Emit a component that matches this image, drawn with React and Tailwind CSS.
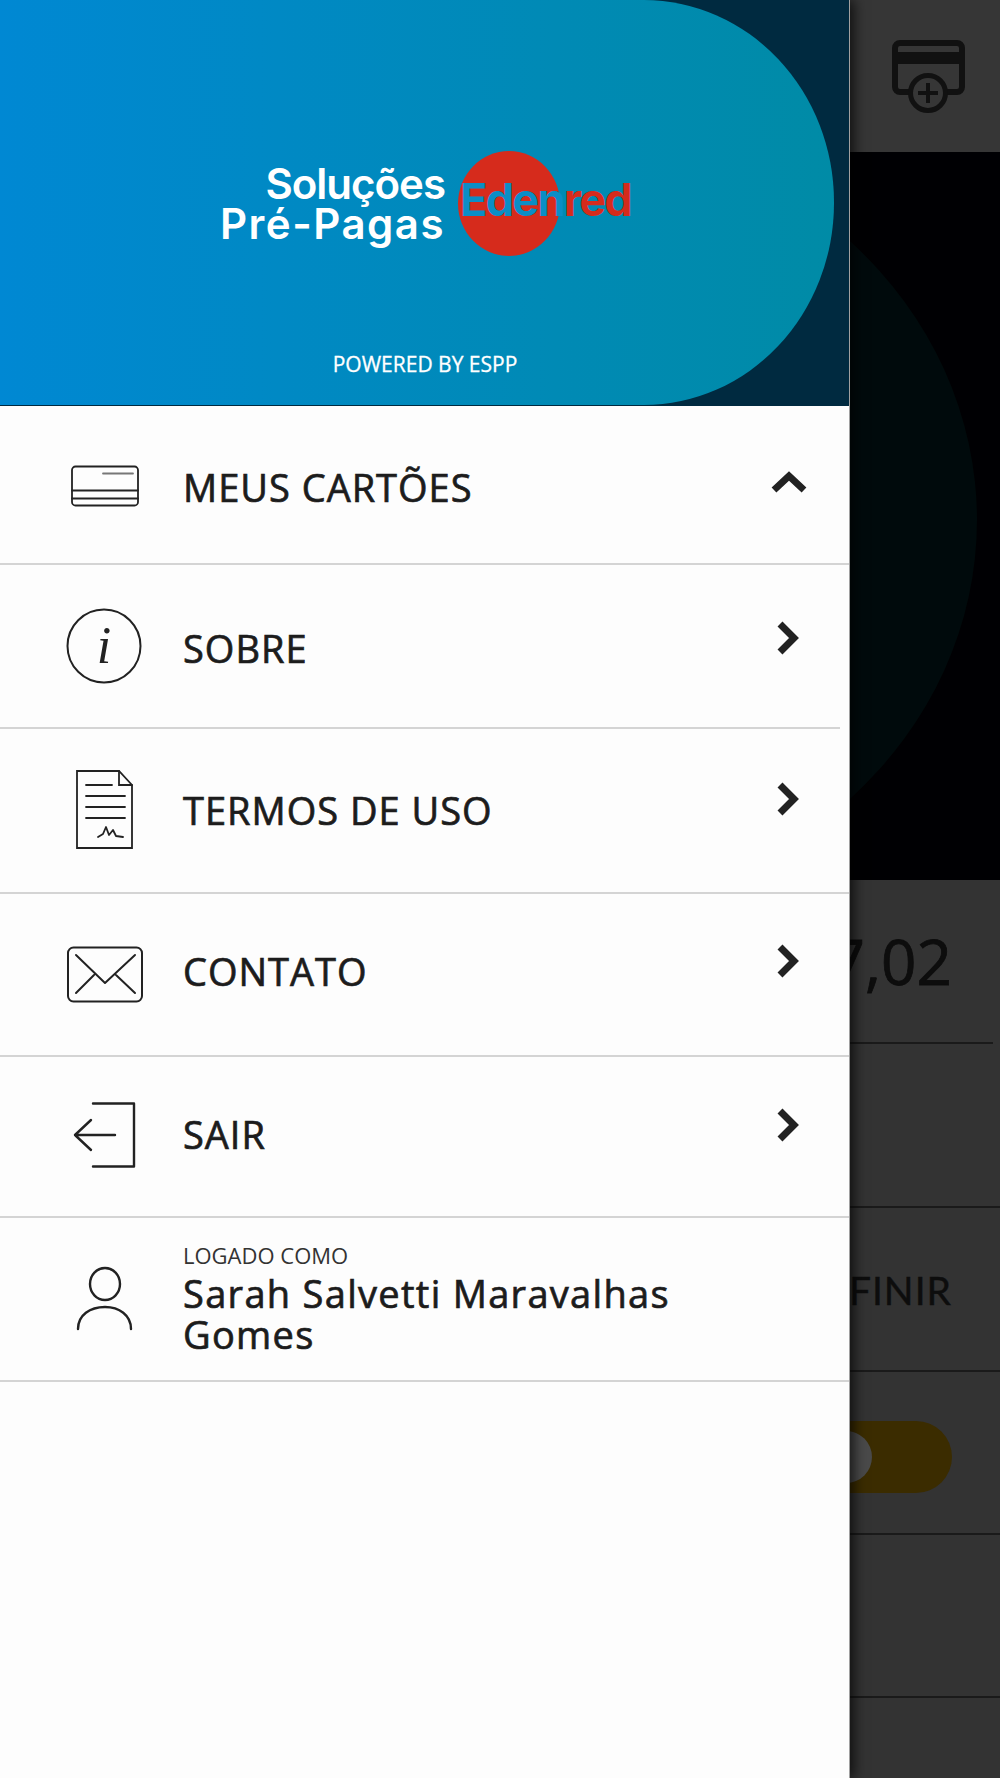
import React from "react";

const Chevron = ({ up }) => (
  <svg width="44" height="44" viewBox="0 0 44 44" fill="none" stroke="#222" strokeWidth="7" strokeLinecap="butt" strokeLinejoin="miter">
    {up ? <path d="M7 30 L22 16 L37 30" /> : <path d="M13 8 L27 22 L13 36" />}
  </svg>
);

const stroke = { fill: "none", stroke: "#222", strokeLinecap: "round", strokeLinejoin: "round" };

const CardIcon = () => (
  <svg width="90" height="60" viewBox="0 0 90 60" {...stroke}>
    <rect x="13" y="11.5" width="66" height="39" rx="3.5" strokeWidth="1.8" />
    <path d="M13 35.5H79M13 43.5H79" strokeWidth="1.8" />
    <path d="M44 18.5H74" stroke="#777" strokeWidth="1.8" />
  </svg>
);

const InfoIcon = () => (
  <svg width="90" height="90" viewBox="0 0 90 90" {...stroke} strokeWidth="2">
    <circle cx="45" cy="45" r="36.5" />
    <text x="45" y="62" textAnchor="middle" fontSize="52" fontStyle="italic" fontFamily="'Liberation Serif', serif" fill="#222" stroke="none">i</text>
  </svg>
);

const DocIcon = () => (
  <svg width="90" height="90" viewBox="0 0 90 90" {...stroke} strokeWidth="1.8">
    <path d="M18 6H60L73 20V83H18Z" strokeLinejoin="miter" />
    <path d="M60 6V20H73" strokeLinejoin="miter" />
    <path d="M27 20H53M27 31H66M27 42H66M27 53H66" />
    <path d="M39 72L44 69L47 62L50 70L54 65L57 71L64 72" />
  </svg>
);

const MailIcon = () => (
  <svg width="90" height="70" viewBox="0 0 90 70" {...stroke} strokeWidth="2">
    <rect x="9" y="7.5" width="74" height="54" rx="5.5" />
    <path d="M17 15L46 43L76 15M17 53L35 35M76 53L57 35" />
  </svg>
);

const ExitIcon = () => (
  <svg width="90" height="80" viewBox="0 0 90 80" {...stroke} strokeWidth="2.4">
    <path d="M34 8.5H75V71.5H34" />
    <path d="M56 40H16M32 25L16 40L32 55" />
  </svg>
);

const UserIcon = () => (
  <svg width="90" height="80" viewBox="0 0 90 80" {...stroke} strokeWidth="2.4">
    <ellipse cx="46" cy="24" rx="15" ry="16" />
    <path d="M19 69C19 55 31 47 46 47C60 47 72 55 72 69" />
  </svg>
);

const Row = ({ h, icon, iconOffset, label, labelOffset, chevOffset, up }) => (
  <div className={`flex items-center shrink-0 ${h}`}>
    <div className="w-[59px] shrink-0" />
    <div className={`w-[90px] shrink-0 flex justify-center ${iconOffset}`}>{icon}</div>
    <span className={`ml-[34px] text-[38px] leading-[48px] tracking-[1px] text-[#1c1c1c] [-webkit-text-stroke:0.7px_#1c1c1c] whitespace-nowrap ${labelOffset}`}>{label}</span>
    <div className={`ml-auto mr-[38px] ${chevOffset}`}>
      <Chevron up={up} />
    </div>
  </div>
);

const Divider = ({ short }) => <div className={`h-[2px] shrink-0 bg-[#d4d4d4] ${short ? "w-[840px]" : "w-[849px]"}`} />;

export default function App() {
  return (
    <div className="flex w-[1000px] h-[1778px] overflow-hidden bg-[#333333] font-['Open_Sans',sans-serif]">
      <aside className="relative z-10 flex flex-col w-[850px] shrink-0 bg-[#fdfdfd] border-r border-[#a0a0a0] shadow-[4px_0_12px_rgba(0,0,0,0.7)]">
        <header className="h-[406px] shrink-0 bg-[#002a40]">
          <div className="flex flex-col items-center h-[405px] w-[834px] pl-[16px] rounded-r-[190px_202px] bg-[linear-gradient(90deg,#0088d3,#008ba6)]">
            <div className="relative mt-[151px] w-[406px] h-[105px] flex">
              <div className="absolute left-[236px] top-0 w-[102px] h-[105px] rounded-[50%] bg-[#d62b1c]" />
              <div className="relative w-[223px] pt-[13px] flex flex-col items-end text-white font-['Inter',sans-serif] font-semibold text-[42px] leading-[40px] tracking-[-1px] whitespace-nowrap">
                <span>Soluções</span>
                <span className="tracking-[1.5px]">Pré-Pagas</span>
              </div>
              <div className="relative ml-[15px] mt-[24px] font-['Inter',sans-serif] font-bold text-[45px] leading-[50px] tracking-[-1.7px] whitespace-nowrap">
                <span className="text-[#0b8ec6]">Eden</span>
                <span className="text-[#d62b1c]">red</span>
              </div>
            </div>
            <div className="mt-auto mb-[28px] text-white text-[21px] leading-[26px] [-webkit-text-stroke:0.3px_#ffffff]">POWERED BY ESPP</div>
          </div>
        </header>

        <Row h="h-[157px]" up icon={<CardIcon />} label="MEUS CARTÕES" chevOffset="-mt-[5px]" labelOffset="pt-[4px]" />
        <Divider />
        <Row h="h-[162px]" icon={<InfoIcon />} label="SOBRE" chevOffset="-mt-[16px]" labelOffset="pt-[3px]" />
        <Divider short />
        <Row h="h-[163px]" icon={<DocIcon />} iconOffset="-mt-[1px]" label="TERMOS DE USO" chevOffset="-mt-[24px]" labelOffset="-mt-[2px]" />
        <Divider />
        <Row h="h-[161px]" icon={<MailIcon />} label="CONTATO" chevOffset="-mt-[28px]" labelOffset="-mt-[8px]" />
        <Divider />
        <Row h="h-[159px]" icon={<ExitIcon />} iconOffset="-mt-[4px]" label="SAIR" chevOffset="-mt-[24px]" labelOffset="-mt-[6px]" />
        <Divider />
        <div className="flex items-center h-[162px] shrink-0">
          <div className="w-[59px] shrink-0" />
          <div className="w-[90px] shrink-0 flex justify-center pt-[2px]"><UserIcon /></div>
          <div className="ml-[34px] flex flex-col">
            <span className="text-[22px] leading-[24px] text-[#333]">LOGADO COMO</span>
            <span className="text-[38px] leading-[41px] tracking-[1.3px] text-[#1c1c1c] [-webkit-text-stroke:0.7px_#1c1c1c] mt-[6px]">Sarah Salvetti Maravalhas<br />Gomes</span>
          </div>
        </div>
        <Divider />
      </aside>

      <main className="flex flex-col flex-1 min-w-0 overflow-hidden">
        <div className="h-[152px] shrink-0 bg-[#363636] flex items-start justify-end pt-[40px] pr-[35px]">
          <svg width="73" height="74" viewBox="0 0 73 74" fill="none">
            <rect x="3" y="3" width="67" height="49" rx="5" stroke="#111" strokeWidth="6" />
            <path d="M3 12H70V24H3Z" fill="#111" />
            <circle cx="36" cy="53" r="17.5" fill="#363636" stroke="#111" strokeWidth="5" />
            <path d="M36 43V63M26 53H46" stroke="#111" strokeWidth="4" />
          </svg>
        </div>
        <div className="relative h-[728px] shrink-0 bg-[#000003] overflow-hidden">
          <div className="absolute left-[-733px] top-[-25px] w-[860px] h-[786px] rounded-[50%] bg-[#000a0c]" />
        </div>
        <div className="h-[162px] shrink-0 flex items-center justify-end pr-[48px] overflow-hidden">
          <span className="text-[62px] leading-none text-[#0d0d0d] [-webkit-text-stroke:0.8px_#0d0d0d] whitespace-nowrap">7,02</span>
        </div>
        <div className="h-[2px] shrink-0 mr-[7px] bg-[#1a1a1a]" />
        <div className="h-[162px] shrink-0" />
        <div className="h-[2px] shrink-0 bg-[#1a1a1a]" />
        <div className="h-[162px] shrink-0 flex items-center justify-end pr-[48px] overflow-hidden">
          <span className="text-[39px] leading-none text-[#0d0d0d] font-['Lato',sans-serif] tracking-[1px] [-webkit-text-stroke:0.4px_#0d0d0d] whitespace-nowrap mt-[3px]">DEFINIR</span>
        </div>
        <div className="h-[2px] shrink-0 bg-[#1a1a1a]" />
        <div className="h-[161px] shrink-0 flex items-center justify-end pr-[48px] overflow-hidden">
          <div className="relative shrink-0 w-[136px] h-[72px] rounded-full bg-[#3b2c00] mt-[8px]">
            <div className="absolute left-[4px] top-[10px] w-[52px] h-[52px] rounded-full bg-[#4a4a4a]" />
          </div>
        </div>
        <div className="h-[2px] shrink-0 bg-[#1a1a1a]" />
        <div className="h-[161px] shrink-0" />
        <div className="h-[2px] shrink-0 bg-[#1a1a1a]" />
      </main>
    </div>
  );
}
